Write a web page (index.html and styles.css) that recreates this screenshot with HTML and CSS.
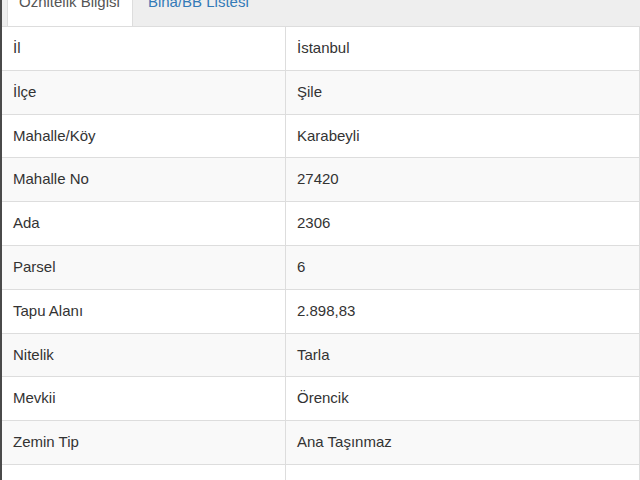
FILE: index.html
```html
<!DOCTYPE html>
<html lang="tr">
<head>
    <meta charset="UTF-8">
    <meta name="viewport" content="width=device-width, initial-scale=1.0">
    <title>Parsel Sorgu</title>
    <link rel="stylesheet" href="styles.css">
</head>
<body>
    <div class="panel">
        <ul class="tabs">
            <li class="active"><a href="#">Öznitelik Bilgisi</a></li>
            <li><a href="#">Bina/BB Listesi</a></li>
        </ul>

        <table class="attrs">
            <tr><td>İl</td><td>İstanbul</td></tr>
            <tr><td>İlçe</td><td>Şile</td></tr>
            <tr><td>Mahalle/Köy</td><td>Karabeyli</td></tr>
            <tr><td>Mahalle No</td><td>27420</td></tr>
            <tr><td>Ada</td><td>2306</td></tr>
            <tr><td>Parsel</td><td>6</td></tr>
            <tr><td>Tapu Alanı</td><td>2.898,83</td></tr>
            <tr><td>Nitelik</td><td>Tarla</td></tr>
            <tr><td>Mevkii</td><td>Örencik</td></tr>
            <tr><td>Zemin Tip</td><td>Ana Taşınmaz</td></tr>
            <tr><td>Pafta</td><td>F22-D-15-B-2-C</td></tr>
        </table>
    </div>
</body>
</html>
```

FILE: styles.css
```css
body {
    margin: 0;
    font-family: "Liberation Sans", Arial, sans-serif;
    font-size: 15px;
    color: #333;
    background-color: #fff;
    overflow: hidden;
}
.panel {
    border-left: 2px solid #4a4a4a;
}
.tabs {
    display: flex;
    list-style: none;
    margin: -19px 0 0 0;
    padding: 0 0 0 5px;
    background-color: #eee;
    border-bottom: 1px solid #ddd;
}
.tabs li {
    margin-right: 3px;
}
.tabs a {
    display: block;
    padding: 10px 12px 14px 11px;
    line-height: 20px;
    color: #337ab7;
    text-decoration: none;
    border: 1px solid transparent;
    border-bottom: none;
}
.tabs li.active a {
    color: #555;
    background-color: #fff;
    border-color: #ddd;
}
.attrs {
    width: 100%;
    border-collapse: collapse;
    border-right: 1px solid #ddd;
}
.attrs td {
    padding: 12px 11px;
    line-height: 18.8px;
    border-bottom: 1px solid #ddd;
    vertical-align: middle;
}
.attrs td:first-child {
    width: 261px;
    border-right: 1px solid #ddd;
}
.attrs tr:nth-child(even) td {
    background-color: #f9f9f9;
}
```
